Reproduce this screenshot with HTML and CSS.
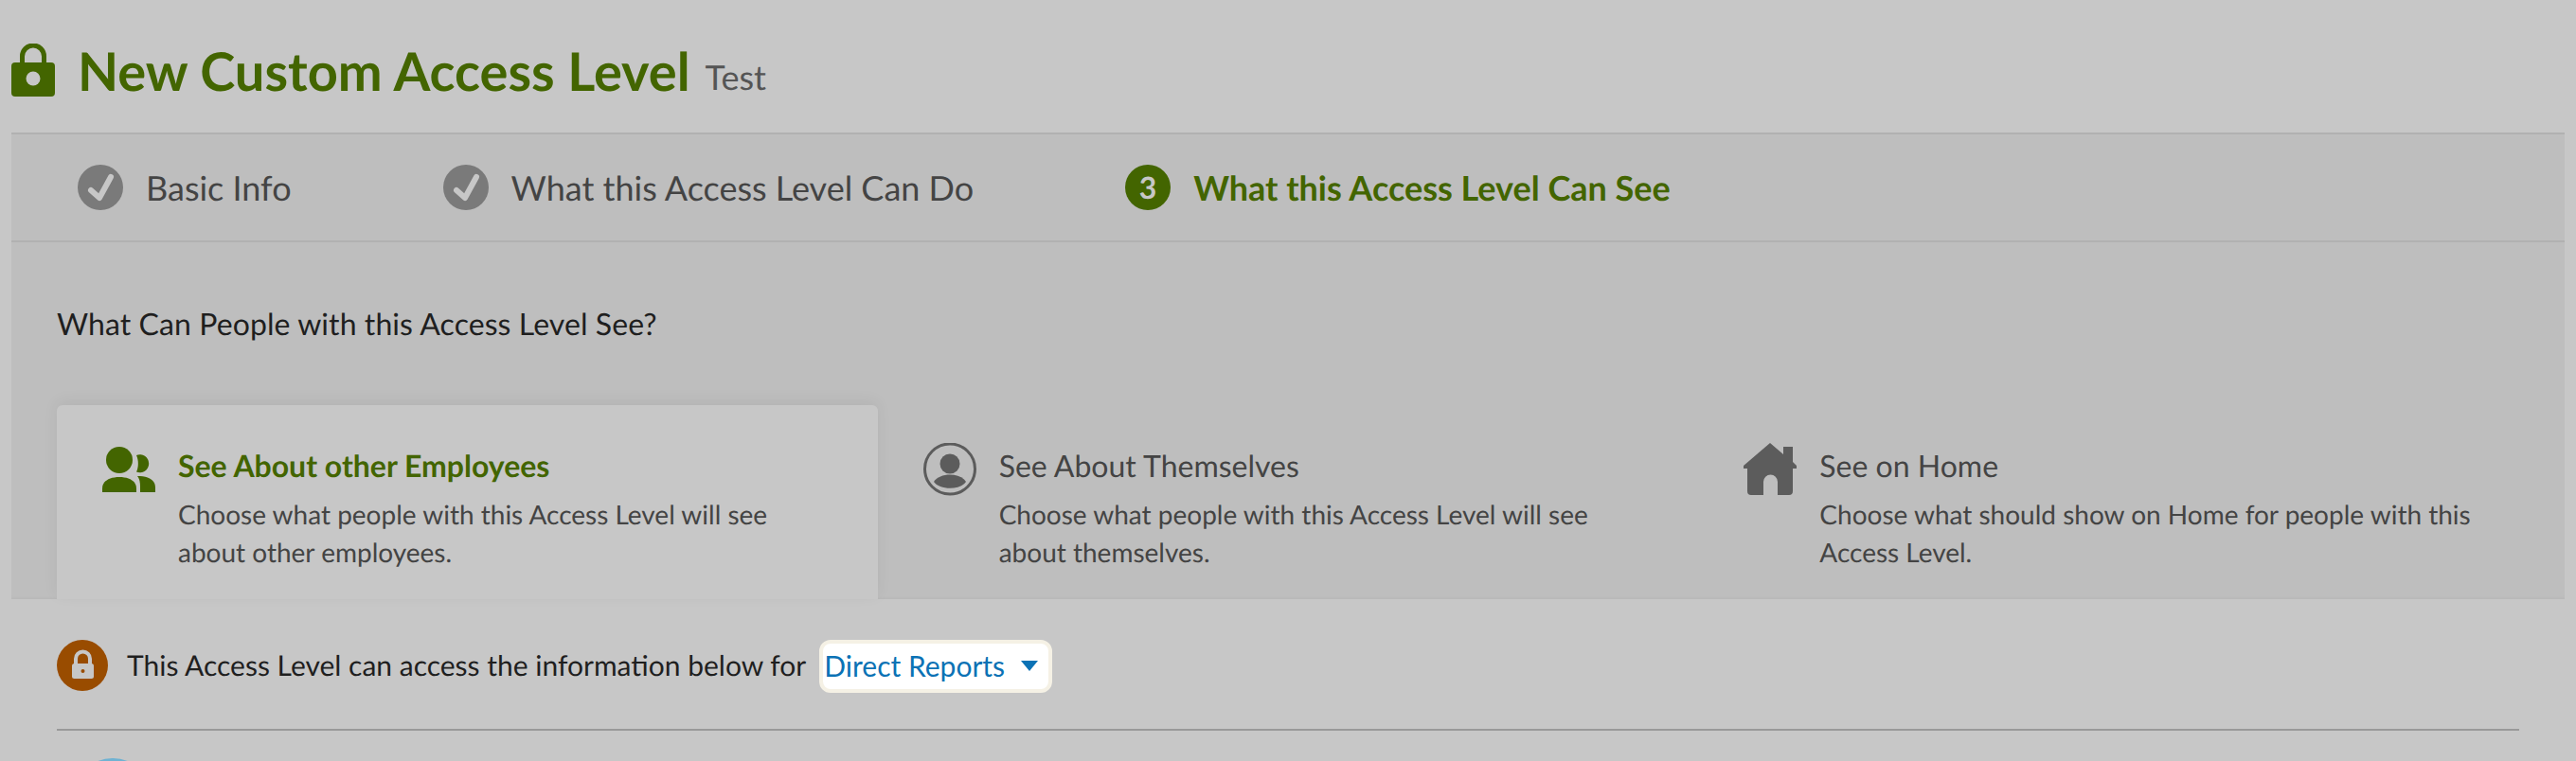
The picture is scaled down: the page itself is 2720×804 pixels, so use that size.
FILE: index.html
```html
<!DOCTYPE html>
<html lang="en">
<head>
<meta charset="utf-8">
<title>New Custom Access Level</title>
<link rel="stylesheet" href="styles.css">
</head>
<body>
<div class="page">
  <header class="header">
    <svg class="header-lock" viewBox="0 0 46 56"><path class="lock-shackle" d="M11.5 22V13.5a11.5 11.5 0 0 1 23 0V22"/><rect class="lock-body" x="0" y="20" width="46" height="36" rx="4"/><circle class="lock-hole" cx="23" cy="37" r="7.5"/></svg>
    <h1 class="title">New Custom Access Level</h1>
    <span class="subtitle">Test</span>
  </header>
  <section class="panel">
    <nav class="steps">
      <div class="step">
        <svg class="step-icon" viewBox="0 0 48 48"><circle class="check-disc" cx="24" cy="24" r="24"/><path class="check-mark" d="M14 27l9 8 12-22"/></svg>
        <span>Basic Info</span>
      </div>
      <div class="step">
        <svg class="step-icon" viewBox="0 0 48 48"><circle class="check-disc" cx="24" cy="24" r="24"/><path class="check-mark" d="M14 27l9 8 12-22"/></svg>
        <span>What this Access Level Can Do</span>
      </div>
      <div class="step step-current">
        <span class="step-number">3</span>
        <span>What this Access Level Can See</span>
      </div>
    </nav>
    <div class="panel-body">
      <h2 class="question">What Can People with this Access Level See?</h2>
      <div class="tabs">
        <div class="tab tab-active">
          <svg class="tab-icon" viewBox="0 0 56 56"><circle cx="18" cy="18" r="14"/><path d="M0 52V48C0 40 8 36 18 36S36 40 36 48V52Z"/><path d="M36 13A9.5 9.5 0 1 1 36 30.500C38.500 26 38.500 18 36 13Z"/><path d="M37 35C47 35 56 38 56 47V52H40V46C40 42 39.500 38 37 35Z"/></svg>
          <div class="tab-text">
            <div class="tab-title">See About other Employees</div>
            <p class="tab-desc">Choose what people with this Access Level will see about other employees.</p>
          </div>
        </div>
        <div class="tab">
          <svg class="tab-icon" viewBox="0 0 56 56"><circle class="avatar-ring" cx="28" cy="27.500" r="26.500"/><circle cx="28" cy="22" r="10.500"/><path d="M11 41C17 31 39 31 45 41C39 50 17 50 11 41Z"/></svg>
          <div class="tab-text">
            <div class="tab-title">See About Themselves</div>
            <p class="tab-desc">Choose what people with this Access Level will see about themselves.</p>
          </div>
        </div>
        <div class="tab">
          <svg class="tab-icon" viewBox="0 0 56 56"><path fill-rule="evenodd" d="M28 0L42 12V4H52V20L56 24V27H52V51Q52 55 48 55H36V41A7.500 7.500 0 0 0 21 41V55H8Q4 55 4 51V27H0V24Z"/></svg>
          <div class="tab-text">
            <div class="tab-title">See on Home</div>
            <p class="tab-desc">Choose what should show on Home for people with this Access Level.</p>
          </div>
        </div>
      </div>
    </div>
  </section>
  <section class="scope">
    <div class="scope-row">
      <svg class="scope-icon" viewBox="0 0 54 54"><circle class="scope-disc" cx="27" cy="27" r="27"/><path class="scope-shackle" d="M20 27V20a7.500 7.500 0 0 1 15 0V27"/><rect class="scope-body" x="16" y="25" width="23" height="16" rx="2.500"/><circle class="scope-dot" cx="27.500" cy="33" r="2"/></svg>
      <span class="scope-text">This Access Level can access the information below for</span>
      <button class="scope-select" type="button">Direct Reports<span class="caret"></span></button>
    </div>
    <div class="next-row"><span class="next-avatar"></span></div>
  </section>
</div>
</body>
</html>
```
FILE: styles.css
```css
html, body {
  margin: 0;
  height: 100%;
  overflow: hidden;
  background: #c7c7c7;
}
body {
  font-family: Lato, "Liberation Sans", sans-serif;
  color: #444;
  text-rendering: geometricPrecision;
}
.page {
  padding: 0 12px;
}
.header {
  height: 140px;
  display: flex;
  align-items: flex-start;
  box-sizing: border-box;
  padding-top: 45px;
}
.header-lock {
  width: 46px;
  height: 56px;
  margin-top: 1px;
  margin-right: 24px;
  flex: none;
}
.lock-shackle {
  fill: none;
  stroke: #436500;
  stroke-width: 5;
}
.lock-body { fill: #436500; }
.lock-hole { fill: #c7c7c7; }
.title {
  margin: 0 16px 0 0;
  font-size: 56px;
  line-height: 60px;
  font-weight: 700;
  color: #436500;
}
.subtitle {
  font-size: 36px;
  line-height: 60px;
  margin-top: 6px;
  color: #555;
}
.panel {
  background: #bebebe;
  border-top: 2px solid #b1b1b1;
  box-shadow: inset 0 -3px 3px -2px #b6b6b6;
}
.steps {
  display: flex;
  align-items: center;
  height: 112px;
  padding-left: 70px;
  border-bottom: 2px solid #b1b1b1;
  font-size: 36px;
  color: #444;
}
.step {
  display: flex;
  align-items: center;
  gap: 24px;
  margin-right: 160px;
}
.step-icon {
  width: 48px;
  height: 48px;
  flex: none;
}
.check-disc { fill: #7a7a7a; }
.check-mark {
  fill: none;
  stroke: #c7c7c7;
  stroke-width: 6;
  stroke-linecap: round;
  stroke-linejoin: round;
}
.step-current {
  color: #436500;
  font-weight: 700;
}
.step-number {
  width: 48px;
  height: 48px;
  border-radius: 50%;
  background: #436500;
  color: #c7c7c7;
  font-size: 32px;
  line-height: 48px;
  text-align: center;
  flex: none;
}
.panel-body {
  padding: 0 48px;
}
.question {
  margin: 0;
  height: 172px;
  box-sizing: border-box;
  padding-top: 66px;
  font-size: 32px;
  line-height: 40px;
  font-weight: 400;
  letter-spacing: 0.08px;
  color: #1f1f1f;
}
.tabs {
  display: grid;
  grid-template-columns: repeat(3, 1fr);
  height: 205px;
}
.tab {
  display: flex;
  gap: 24px;
  padding: 40px 48px 0;
}
.tab-active {
  background: #c7c7c7;
  border-radius: 6px 6px 0 0;
  box-shadow: 0 -4px 16px rgba(0, 0, 0, 0.06);
}
.tab-icon {
  width: 56px;
  height: 56px;
  flex: none;
  fill: #5c5c5c;
}
.tab-active .tab-icon { fill: #436500; }
.avatar-ring {
  fill: none;
  stroke: #5c5c5c;
  stroke-width: 3;
}
.tab-text {
  padding-top: 4px;
}
.tab-title {
  font-size: 32px;
  line-height: 40px;
  margin-bottom: 11px;
}
.tab-active .tab-title {
  font-weight: 700;
  color: #436500;
}
.tab-desc {
  margin: 0;
  font-size: 28px;
  line-height: 40px;
  color: #444;
}
.scope {
  padding: 43px 48px 0;
}
.scope-row {
  display: flex;
  align-items: flex-start;
  height: 94px;
  border-bottom: 2px solid #999;
}
.scope-icon {
  width: 54px;
  height: 54px;
  flex: none;
  margin-right: 20px;
}
.scope-disc { fill: #994c00; }
.scope-shackle {
  fill: none;
  stroke: #c7c7c7;
  stroke-width: 4;
}
.scope-body { fill: #c7c7c7; }
.scope-dot { fill: #994c00; }
.scope-text {
  font-size: 30px;
  line-height: 54px;
  color: #1f1f1f;
  margin-right: 14px;
}
.scope-select {
  display: flex;
  align-items: center;
  height: 56px;
  box-sizing: border-box;
  padding: 0 11px 2px 1px;
  border: 4px solid #f5f1e5;
  border-radius: 12px;
  background: #fff;
  font: 30px/48px Lato, "Liberation Sans", sans-serif;
  color: #0b72b5;
}
.caret {
  width: 0;
  height: 0;
  margin-left: 17px;
  border-left: 9px solid transparent;
  border-right: 9px solid transparent;
  border-top: 11px solid #0b72b5;
}
.next-row {
  height: 3px;
  margin-top: 29px;
  padding-left: 17px;
  overflow: hidden;
}
.next-avatar {
  display: block;
  width: 84px;
  height: 84px;
  border-radius: 50%;
  background: #6fb2d2;
}
```
